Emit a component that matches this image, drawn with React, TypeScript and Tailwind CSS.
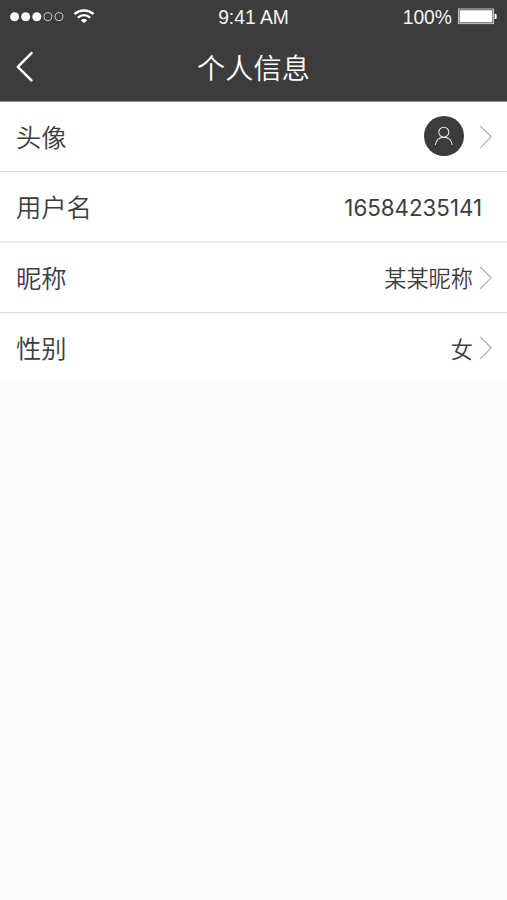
import type { ReactNode } from "react";

const cjkFont = "font-['Noto_Sans_CJK_SC',sans-serif]";

function StatusBar() {
  return (
    <div className="grid h-[33px] grid-cols-3 items-center font-['Liberation_Sans',sans-serif] text-[19.3px] text-[#f4f4f4]">
      <div className="flex items-center pl-[10px]">
        <svg className="h-[10px] w-[54px]" viewBox="0 0 54 10" fill="none">
          <circle cx="4.6" cy="4.7" r="4.5" fill="#fff" />
          <circle cx="15.7" cy="4.7" r="4.5" fill="#fff" />
          <circle cx="26.8" cy="4.7" r="4.5" fill="#fff" />
          <circle cx="37.9" cy="4.7" r="4" stroke="#ddd" strokeWidth="0.9" />
          <circle cx="49" cy="4.7" r="4" stroke="#ddd" strokeWidth="0.9" />
        </svg>
        <svg className="ml-[9px] h-[15px] w-[22px]" viewBox="0 0 22 15" fill="none" stroke="#fff">
          <path d="M1.5 5.2C7 .1 15 .1 20.5 5.2" strokeWidth="2.5" />
          <path d="M4.8 8.7c3.9-3.3 8.5-3.3 12.4 0" strokeWidth="2.3" />
          <path d="M11 14.1l-2.9-2.3c-.3-2.3 6.1-2.3 5.8 0z" fill="#fff" stroke="none" />
        </svg>
      </div>
      <div className="pt-[3px] text-center">9:41 AM</div>
      <div className="flex items-center justify-end pr-[9px]">
        <span className="relative top-px pt-px">100%</span>
        <svg className="ml-[6px] h-[17px] w-[40px]" viewBox="0 0 40 17" fill="none">
          <rect x="0.5" y="1" width="35" height="14.6" stroke="#c8c8c8" strokeWidth="1" />
          <rect x="1.6" y="2.2" width="32.8" height="12.2" fill="#fff" />
          <path d="M36.6 5.7h.8q1.2 0 1.2 1.2v3q0 1.2-1.2 1.2h-.8z" fill="#fff" />
        </svg>
      </div>
    </div>
  );
}

function Header() {
  return (
    <header className="h-[102px] border-b border-[#8a8a8a] bg-[#3c3c3c]">
      <StatusBar />
      <div className="grid h-[68px] grid-cols-[1fr_auto_1fr] items-center">
        <button type="button" aria-label="返回" className="pl-[15px]">
          <svg className="h-[32px] w-[20px]" viewBox="0 0 20 32" fill="none" stroke="#fff" strokeWidth="2.5" strokeLinecap="round" strokeLinejoin="round">
            <path d="M16.5 2.2L2.8 15.8l13.7 13.6" />
          </svg>
        </button>
        <h1 className="text-[28.2px] leading-none font-[350] text-white">个人信息</h1>
      </div>
    </header>
  );
}

function Chevron() {
  return (
    <svg className="h-[24px] w-[13px]" viewBox="0 0 13 24" fill="none" stroke="#aaa" strokeWidth="1.2">
      <path d="M1.2 .8l11 11-11 11" />
    </svg>
  );
}

function Avatar() {
  return (
    <span className="mr-[9px] mb-px flex size-[40px] items-center justify-center rounded-full bg-[#3c3c3c]">
      <svg className="h-[20px] w-[20px]" viewBox="0 0 20 20" fill="none" stroke="#eee" strokeWidth="1.1">
        <circle cx="9.8" cy="6.2" r="5" />
        <path d="M1.3 19c.8-4.8 4-7.8 8.5-7.8s7.7 3 8.5 7.8" />
      </svg>
    </span>
  );
}

interface RowProps {
  label: string;
  children: ReactNode;
  className: string;
  arrow?: boolean;
}

function Row({ label, children, className, arrow = true }: RowProps) {
  return (
    <div className={`flex items-center justify-between bg-white pl-4 ${className}`}>
      <span className="text-[25.3px] leading-none font-[350]">{label}</span>
      <div className={`flex items-center gap-[6px] text-[22.2px] leading-none font-[350] ${arrow ? "pr-[15px]" : "pr-[25px]"}`}>
        {children}
        {arrow && <Chevron />}
      </div>
    </div>
  );
}

export default function App() {
  return (
    <div className={`min-h-screen w-full bg-[#fbfbfb] text-[#3c3c3c] ${cjkFont}`}>
      <Header />
      <main>
        <Row label="头像" className="h-[70px] border-b border-[#d9d9d9]">
          <Avatar />
        </Row>
        <Row label="用户名" className="h-[71px] border-b-2 border-[#eee]" arrow={false}>
          <span className="pt-[3px] font-['Inter',sans-serif] text-[22.3px] font-normal">16584235141</span>
        </Row>
        <Row label="昵称" className="h-[70px] border-b border-[#d9d9d9]">
          <span>某某昵称</span>
        </Row>
        <Row label="性别" className="h-[70px]">
          <span>女</span>
        </Row>
      </main>
    </div>
  );
}
